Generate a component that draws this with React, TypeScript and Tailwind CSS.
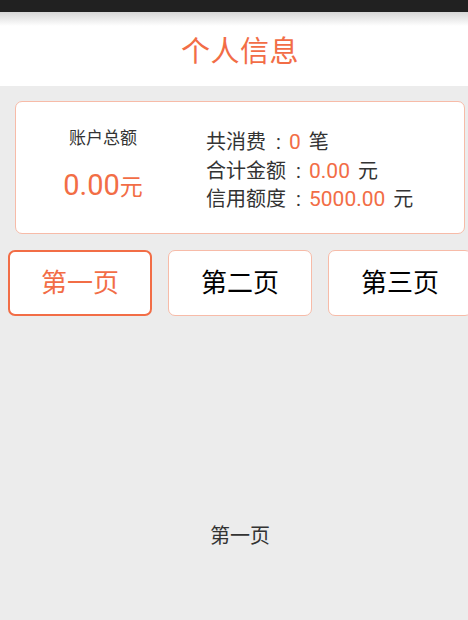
import React, { useState } from 'react';

const TABS = ['第一页', '第二页', '第三页'];

const Colon: React.FC = () => (
  <span className="inline-block w-[23px] text-center pl-[2px]">:</span>
);

const Num: React.FC<{ v: string }> = ({ v }) => (
  <span className="text-[21px] text-[#f26d46]">{v}</span>
);

const App: React.FC = () => {
  const [active, setActive] = useState(0);

  return (
    <div className="w-[468px] h-[620px] overflow-hidden">
      <div
        className="w-[480px] h-[620px] bg-[#ececec] flex flex-col"
        style={{ fontFamily: 'Roboto, "Noto Sans CJK SC", sans-serif' }}
      >
        {/* Status bar */}
        <div className="h-[12px] bg-[#212121] shrink-0" />

        {/* Header */}
        <div className="relative h-[74px] bg-white flex items-center justify-center shrink-0">
          <div className="absolute top-0 left-0 right-0 h-[14px] bg-gradient-to-b from-[#d6d6d6] to-white" />
          <h1 className="relative mt-[6px] text-[29px] text-[#f26d46] leading-none tracking-[0.5px]">个人信息</h1>
        </div>

        {/* Account card */}
        <div className="ml-[15px] w-[450px] mt-[15px] h-[133px] bg-white border border-[#f7bba8] rounded-[7px] flex items-center">
          <div className="w-[174px] flex flex-col items-center">
            <span className="text-[17px] text-[#333] leading-none -mt-[5px]">账户总额</span>
            <span className="mt-[24px] text-[#f26d46] leading-none">
              <span className="text-[29px]">0.00</span>
              <span className="text-[23px]">元</span>
            </span>
          </div>
          <div className="pl-[16px] pt-[7px] flex flex-col text-[20px] text-[#333] leading-[28.5px]">
            <span>
              共消费<Colon /><Num v="0" />
              <span className="ml-[8px]">笔</span>
            </span>
            <span>
              合计金额<Colon /><Num v="0.00" />
              <span className="ml-[8px]">元</span>
            </span>
            <span>
              信用额度<Colon /><Num v="5000.00" />
              <span className="ml-[8px]">元</span>
            </span>
          </div>
        </div>

        {/* Tabs */}
        <div className="mt-[16px] pl-[8px] flex gap-[16px]">
          {TABS.map((t, i) => (
            <button
              key={t}
              onClick={() => setActive(i)}
              className={`w-[144px] h-[66px] shrink-0 bg-white rounded-[7px] flex items-center justify-center text-[26px] leading-none ${
                active === i
                  ? 'border-2 border-[#f26d46] text-[#f26d46]'
                  : 'border border-[#f7bba8] text-black'
              }`}
            >
              {t}
            </button>
          ))}
        </div>

        {/* Content */}
        <div className="mt-[210px] flex justify-center">
          <span className="text-[20px] text-[#333] leading-none">{TABS[active]}</span>
        </div>
      </div>
    </div>
  );
};

export default App;
